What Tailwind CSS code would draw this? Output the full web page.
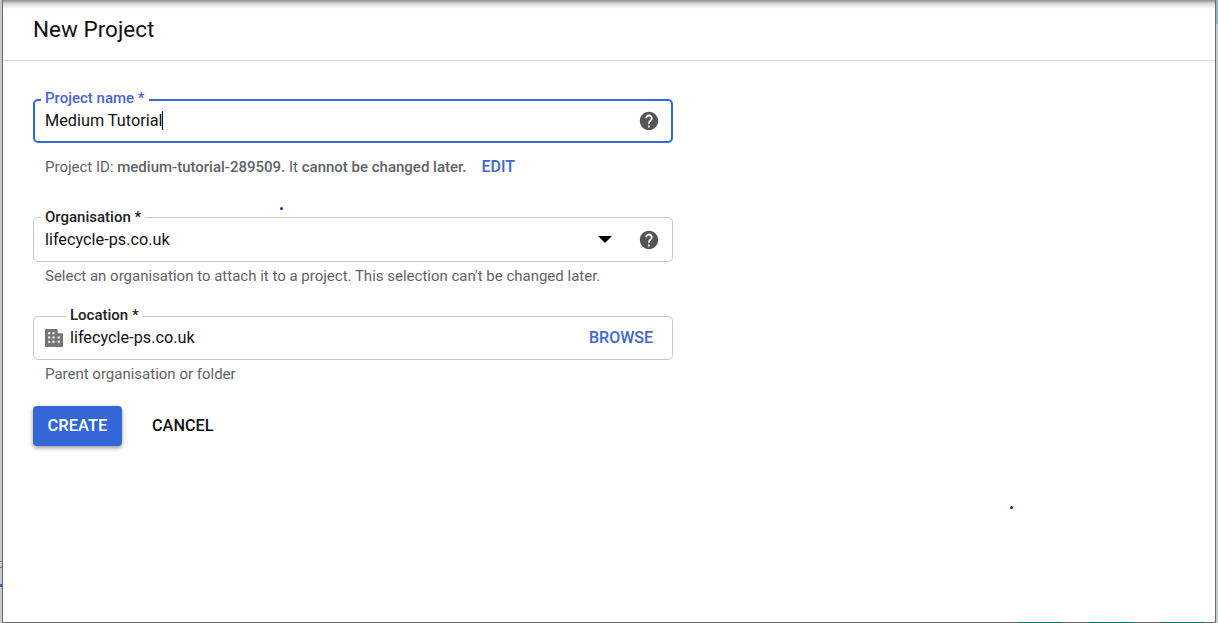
<!DOCTYPE html>
<html>
<head>
<meta charset="utf-8">
<script src="https://cdn.jsdelivr.net/npm/@tailwindcss/browser@4"></script>
</head>
<body class="bg-white overflow-hidden font-['Roboto',sans-serif]">
<div class="relative w-[1218px] h-[623px] overflow-hidden bg-[#c9c9c9]">
  <!-- desktop behind window, right edge -->
  <div class="absolute right-0 top-0 w-[2px] h-[24px] bg-[#8fb6c4]"></div>
  <div class="absolute right-0 top-[24px] w-[2px] h-[599px] bg-[#c2ced6]"></div>
  <div class="absolute left-0 top-[561px] w-[2px] h-[7px] border-y border-[#777]"></div>
  <div class="absolute left-0 top-[584px] w-[2px] h-[3px] bg-[#2f6fc0]"></div>
  <!-- window frame -->
  <div class="absolute left-[2px] top-0 w-[1214px] h-[623px] border-x border-b border-[#6b6b6b] bg-white">
    <div class="h-[9px] bg-gradient-to-b from-[#8e8e8e] via-[#d8d8d8] via-40% to-white"></div>
    <header class="h-[52px] pl-[30px] pb-[12px] border-b border-[#dadce0] flex items-center">
      <h1 class="text-[22.5px] leading-[28px] text-[#111]">New Project</h1>
    </header>
    <main class="pl-[30px] w-[670px] pt-[38px]">
      <!-- Project name -->
      <div class="relative h-[44px] border-2 border-[#3367d6] rounded-[5px] flex items-center pl-[10px] pr-[11px]">
        <span class="absolute left-[6px] top-[-12px] bg-white pl-[4px] pr-[5px] text-[15px] leading-[18px] font-medium text-[#4a64d8]">Project name *</span>
        <span class="text-[16.25px] text-[#111] border-r border-[#111] leading-[19px] -mt-px">Medium Tutorial</span>
        <svg class="ml-auto w-[22px] h-[22px] fill-[#555]" viewBox="0 0 24 24"><path d="M12 2C6.48 2 2 6.48 2 12s4.48 10 10 10 10-4.48 10-10S17.52 2 12 2zm1 17h-2v-2h2v2zm2.07-7.75l-.9.92C13.45 12.9 13 13.5 13 15h-2v-.5c0-1.1.45-2.1 1.17-2.83l1.24-1.26c.37-.36.59-.86.59-1.41 0-1.1-.9-2-2-2s-2 .9-2 2H8c0-2.21 1.79-4 4-4s4 1.79 4 4c0 .88-.36 1.68-.93 2.25z"/></svg>
      </div>
      <div class="flex items-center pl-[12px] mt-[15px] h-[18px] text-[15px] leading-[18px] text-[#5f6368]">
        <span>Project ID: <span class="font-medium">medium-tutorial-289509.</span> It <span class="font-medium">cannot be changed later.</span></span>
        <span class="ml-[15px] font-medium text-[#3f67d1] text-[16px]">EDIT</span>
      </div>
      <!-- Organisation -->
      <div class="relative mt-[41px] h-[45px] border border-[#c8c8c8] rounded-[5px] flex items-center pl-[11px] pr-[12px]">
        <span class="absolute left-[7px] top-[-10px] bg-white px-[4px] text-[15px] leading-[18px] font-medium text-[#202124]">Organisation *</span>
        <span class="text-[16.25px] text-[#111] leading-[19px] -mt-px">lifecycle-ps.co.uk</span>
        <span class="ml-auto mr-[26px] w-0 h-0 border-x-[7px] border-x-transparent border-t-[7px] border-t-black"></span>
        <svg class="w-[22px] h-[22px] fill-[#555]" viewBox="0 0 24 24"><path d="M12 2C6.48 2 2 6.48 2 12s4.48 10 10 10 10-4.48 10-10S17.52 2 12 2zm1 17h-2v-2h2v2zm2.07-7.75l-.9.92C13.45 12.9 13 13.5 13 15h-2v-.5c0-1.1.45-2.1 1.17-2.83l1.24-1.26c.37-.36.59-.86.59-1.41 0-1.1-.9-2-2-2s-2 .9-2 2H8c0-2.21 1.79-4 4-4s4 1.79 4 4c0 .88-.36 1.68-.93 2.25z"/></svg>
      </div>
      <p class="pl-[12px] mt-[5px] h-[18px] text-[15px] leading-[18px] text-[#5f6368]">Select an organisation to attach it to a project. This selection can't be changed later.</p>
      <!-- Location -->
      <div class="relative mt-[31px] h-[44px] border border-[#c8c8c8] rounded-[5px] flex items-center pl-[11px] pr-[19px]">
        <span class="absolute left-[32px] top-[-11px] bg-white px-[4px] text-[15px] leading-[18px] font-medium text-[#202124]">Location *</span>
        <svg class="w-[18px] h-[18px] mr-[7px]" viewBox="0 0 17 17"><path fill="#757575" d="M0 1a1 1 0 0 1 1-1h10a1 1 0 0 1 1 1v3h4a1 1 0 0 1 1 1v11a1 1 0 0 1-1 1H1a1 1 0 0 1-1-1z"/><path fill="#fff" d="M3 3h2v2H3zM7 3h2v2H7zM3 7h2v2H3zM7 7h2v2H7zM3 11h2v2H3zM7 11h2v2H7zM12 7h2v2h-2zM12 11h2v2h-2z"/></svg>
        <span class="text-[16.25px] text-[#111] leading-[19px] -mt-[2px]">lifecycle-ps.co.uk</span>
        <span class="ml-auto text-[16px] font-medium text-[#3f67d1]">BROWSE</span>
      </div>
      <p class="pl-[12px] mt-[5px] h-[18px] text-[15px] leading-[18px] text-[#5f6368]">Parent organisation or folder</p>
      <!-- Actions -->
      <div class="flex items-center mt-[23px]">
        <button class="w-[89px] h-[40px] rounded-[4px] bg-[#3367d6] text-white text-[16.5px] font-medium shadow-[0_2px_4px_rgba(0,0,0,0.4)]">CREATE</button>
        <button class="ml-[30px] text-[16.25px] font-medium text-[#111]">CANCEL</button>
      </div>
    </main>
  </div>
  <!-- stray specks -->
  <div class="absolute left-[280px] top-[207px] w-[3px] h-[3px] rounded-full bg-[#1a1ae8]"></div>
  <div class="absolute left-[1010px] top-[506px] w-[3px] h-[3px] rounded-full bg-[#2a1a90]"></div>
  <!-- teal slivers along the bottom edge -->
  <div class="absolute left-[1019px] bottom-0 w-[43px] h-px bg-[#0f6a80]"></div>
  <div class="absolute left-[1089px] bottom-0 w-[44px] h-px bg-[#0f6a80]"></div>
  <div class="absolute left-[1160px] bottom-0 w-[44px] h-px bg-[#0f6a80]"></div>
</div>
</body>
</html>
